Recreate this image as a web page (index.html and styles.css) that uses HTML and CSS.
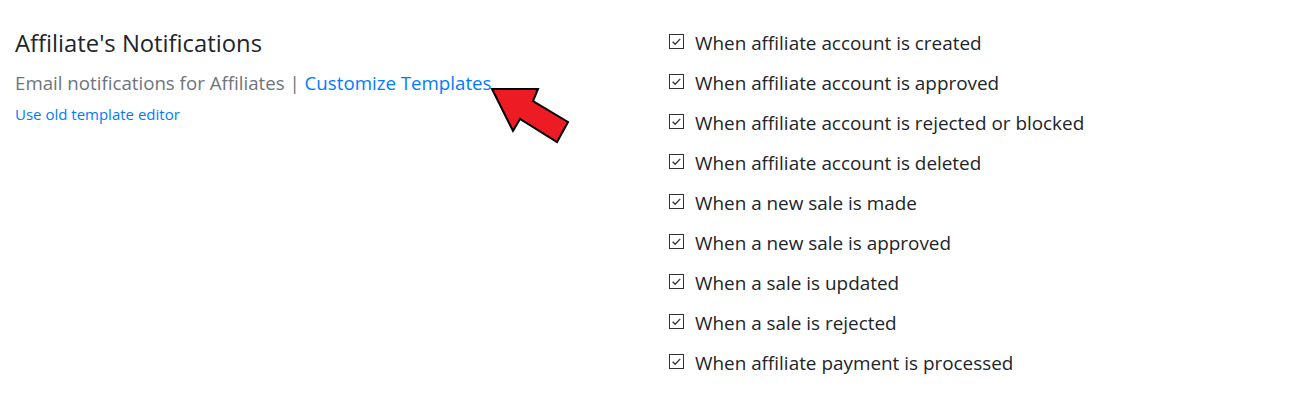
FILE: index.html
```html
<!DOCTYPE html>
<html>
<head>
<meta charset="utf-8">
<link rel="stylesheet" href="styles.css">
</head>
<body>
<div class="page">
  <div class="left">
    <h2 class="title">Affiliate's Notifications</h2>
    <p class="subtitle">Email notifications for Affiliates | <a class="link" href="#">Customize Templates</a></p>
    <a class="small-link" href="#">Use old template editor</a>
    <svg class="arrow" width="90" height="70" viewBox="485 80 90 70">
      <polygon points="492,90 538,90 533,102 568,123 557,143 520,120 513,132" fill="#ed1c24" stroke="#000" stroke-width="2" stroke-linejoin="miter"/>
    </svg>
  </div>
  <ul class="checks">
    <li><span class="box"><svg viewBox="0 0 14 14"><path d="M2.8 7.2 L5.6 10 L11 4.2" fill="none" stroke="#333" stroke-width="1.4"/></svg></span>When affiliate account is created</li>
    <li><span class="box"><svg viewBox="0 0 14 14"><path d="M2.8 7.2 L5.6 10 L11 4.2" fill="none" stroke="#333" stroke-width="1.4"/></svg></span>When affiliate account is approved</li>
    <li><span class="box"><svg viewBox="0 0 14 14"><path d="M2.8 7.2 L5.6 10 L11 4.2" fill="none" stroke="#333" stroke-width="1.4"/></svg></span>When affiliate account is rejected or blocked</li>
    <li><span class="box"><svg viewBox="0 0 14 14"><path d="M2.8 7.2 L5.6 10 L11 4.2" fill="none" stroke="#333" stroke-width="1.4"/></svg></span>When affiliate account is deleted</li>
    <li><span class="box"><svg viewBox="0 0 14 14"><path d="M2.8 7.2 L5.6 10 L11 4.2" fill="none" stroke="#333" stroke-width="1.4"/></svg></span>When a new sale is made</li>
    <li><span class="box"><svg viewBox="0 0 14 14"><path d="M2.8 7.2 L5.6 10 L11 4.2" fill="none" stroke="#333" stroke-width="1.4"/></svg></span>When a new sale is approved</li>
    <li><span class="box"><svg viewBox="0 0 14 14"><path d="M2.8 7.2 L5.6 10 L11 4.2" fill="none" stroke="#333" stroke-width="1.4"/></svg></span>When a sale is updated</li>
    <li><span class="box"><svg viewBox="0 0 14 14"><path d="M2.8 7.2 L5.6 10 L11 4.2" fill="none" stroke="#333" stroke-width="1.4"/></svg></span>When a sale is rejected</li>
    <li><span class="box"><svg viewBox="0 0 14 14"><path d="M2.8 7.2 L5.6 10 L11 4.2" fill="none" stroke="#333" stroke-width="1.4"/></svg></span>When affiliate payment is processed</li>
  </ul>
</div>
</body>
</html>
```
FILE: styles.css
```css
html, body {
  margin: 0;
  padding: 0;
  background: #fff;
}
body {
  font-family: "Open Sans", "Noto Sans", sans-serif;
  color: #212529;
}
.page {
  display: grid;
  grid-template-columns: 654px 1fr;
  padding: 22px 15px 0 15px;
}
.left {
  position: relative;
}
.title {
  margin: 6px 0 0 0;
  font-size: 23.8px;
  font-weight: 400;
  line-height: 30px;
  color: #212529;
}
.subtitle {
  margin: 12px 0 0 0;
  font-size: 18.7px;
  line-height: 25px;
  color: #6c757d;
}
.link {
  color: #007bff;
  text-decoration: none;
}
.small-link {
  display: block;
  margin-top: 10px;
  font-size: 15px;
  line-height: 18px;
  color: #007bff;
  text-decoration: none;
}
.arrow {
  position: absolute;
  left: 470px;
  top: 57px;
  overflow: visible;
}
.checks {
  list-style: none;
  margin: 1px 0 0 0;
  padding: 0;
}
.checks li {
  display: flex;
  align-items: center;
  height: 40px;
  font-size: 18.9px;
  color: #212529;
}
.box {
  box-sizing: border-box;
  width: 15px;
  height: 15px;
  border: 1px solid #333;
  margin: 0 11px 4px 0;
  display: flex;
}
.box svg {
  width: 13px;
  height: 13px;
}
```
